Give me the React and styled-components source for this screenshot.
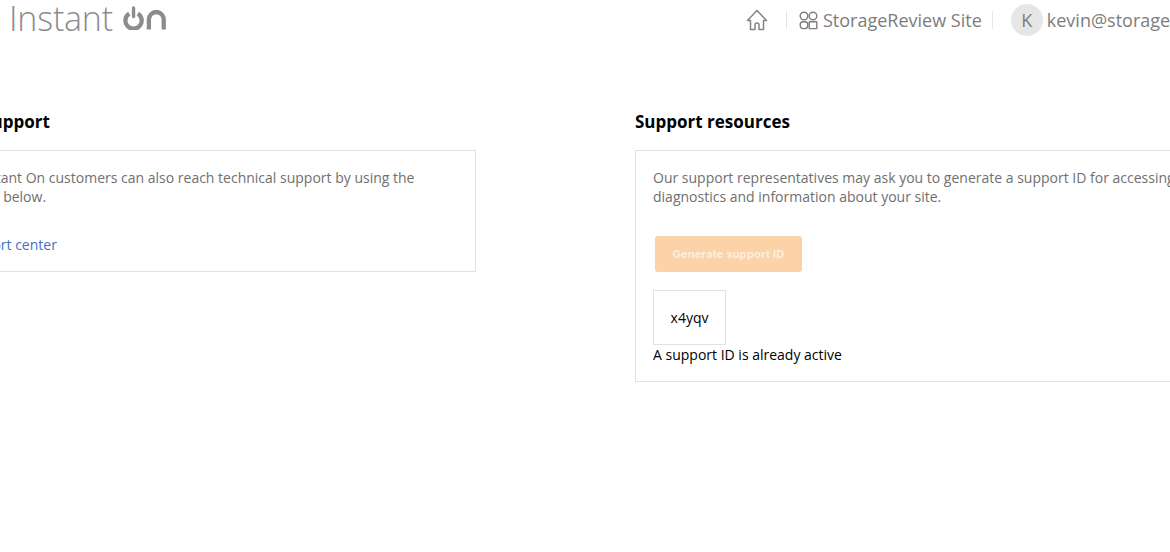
import React from 'react';
import styled, { createGlobalStyle } from 'styled-components';

const GlobalStyle = createGlobalStyle`
  html, body {
    margin: 0;
    padding: 0;
    background: #fff;
    font-family: "Open Sans", "Liberation Sans", sans-serif;
  }
`;

const Page = styled.div`
  width: 1170px;
  height: 552px;
  overflow: hidden;
  background: #fff;
`;

const Header = styled.header`
  display: flex;
  align-items: center;
  height: 40px;
  padding-left: 9px;
  white-space: nowrap;
`;

const Logo = styled.div`
  display: flex;
  align-items: center;
  gap: 10px;
  width: 158px;
  flex-shrink: 0;
  margin-top: -4px;
  color: #8c8c8c;
  font-size: 34px;
  font-weight: 300;
  letter-spacing: -0.2px;
  line-height: 36px;
`;

const Nav = styled.nav`
  display: flex;
  align-items: center;
  flex-shrink: 0;
  margin-left: 579px;
  color: #7d7d7d;
  font-size: 18px;
`;

const HomeLink = styled.div`
  display: flex;
  width: 22px;
  height: 22px;
  margin-right: 18px;
  color: #858585;
`;

const Divider = styled.span`
  width: 1px;
  height: 18px;
  background: #e6e6e6;
`;

const SiteName = styled.div`
  display: flex;
  align-items: center;
  gap: 5px;
  padding: 0 10px 0 12px;
`;

const Avatar = styled.span`
  display: flex;
  align-items: center;
  justify-content: center;
  width: 32px;
  height: 32px;
  margin: 0 4px 0 18px;
  border-radius: 50%;
  background: #e6e6e6;
  color: #7d7d7d;
  font-size: 18px;
`;

const Columns = styled.main`
  display: grid;
  grid-template-columns: 537px 700px;
  column-gap: 159px;
  margin: 70px 0 0 -61px;
`;

const Title = styled.h2`
  margin: 0 0 16px;
  color: #000;
  font-size: 17px;
  font-weight: 700;
  line-height: 24px;
`;

const Card = styled.section`
  box-sizing: border-box;
  padding: 17px;
  border: 1px solid #e1e1e1;
  color: #6f6f6f;
  font-size: 14px;
  line-height: 19px;
`;

const Text = styled.p`
  margin: 0;
`;

const SupportLink = styled.a`
  display: block;
  margin: 29px 0 0 2px;
  color: #3f72c4;
  text-decoration: none;
`;

const GenerateButton = styled.button`
  display: block;
  width: 147px;
  height: 36px;
  margin: 30px 0 18px 2px;
  padding: 0;
  border: 0;
  border-radius: 3px;
  background: #fcd2a8;
  color: #fdeedd;
  font-family: Inter, "Liberation Sans", sans-serif;
  font-size: 11px;
  font-weight: 700;
  letter-spacing: 0.2px;
`;

const CodeBox = styled.div`
  display: flex;
  align-items: center;
  justify-content: center;
  box-sizing: border-box;
  width: 73px;
  height: 55px;
  border: 1px solid #e1e1e1;
  color: #000;
`;

const Note = styled.div`
  color: #000;
`;

function HomeIcon() {
  return (
    <svg viewBox="0 0 22 22" width="22" height="22" fill="none" stroke="currentColor" strokeWidth="1.5" strokeLinejoin="round">
      <path d="M4.500 20.500V11.500H1.500L11 1.500l9.500 10h-3v9h-4.500v-4.500a2 2 0 0 0-4 0v4.500z" />
    </svg>
  );
}

function SitesIcon() {
  return (
    <svg viewBox="0 0 19 19" width="19" height="19" fill="none" stroke="currentColor" strokeWidth="1.400">
      <circle cx="5" cy="5" r="3.800" />
      <circle cx="14" cy="5" r="3.800" />
      <rect x="1.200" y="10.800" width="7.600" height="6.800" rx="3" />
      <rect x="10.200" y="10.800" width="7.600" height="6.800" rx="0.500" />
    </svg>
  );
}

function OnMark() {
  return (
    <svg viewBox="0 0 46 24" width="46" height="24" fill="none" stroke="#8c8c8c" strokeWidth="4.500">
      <path d="M6.500 7.500a8.500 8.500 0 1 0 9 0" />
      <path d="M11 1.500v9" strokeWidth="3.500" strokeLinecap="round" />
      <path d="M27 24V13.500a7.750 7.750 0 0 1 15.500 0V24" />
    </svg>
  );
}

export default function App() {
  return (
    <Page>
      <GlobalStyle />
      <Header>
        <Logo>
          Instant
          <OnMark />
        </Logo>
        <Nav>
          <HomeLink><HomeIcon /></HomeLink>
          <Divider />
          <SiteName>
            <SitesIcon />
            StorageReview Site
          </SiteName>
          <Divider />
          <Avatar>K</Avatar>
          kevin@storagereview.com
        </Nav>
      </Header>
      <Columns>
        <div>
          <Title>Chat support</Title>
          <Card>
            <Text>All Instant On customers can also reach technical support by using the<br />option below.</Text>
            <SupportLink href="#">Support center</SupportLink>
          </Card>
        </div>
        <div>
          <Title>Support resources</Title>
          <Card>
            <Text>Our support representatives may ask you to generate a support ID for accessing<br />diagnostics and information about your site.</Text>
            <GenerateButton disabled>Generate support ID</GenerateButton>
            <CodeBox>x4yqv</CodeBox>
            <Note>A support ID is already active</Note>
          </Card>
        </div>
      </Columns>
    </Page>
  );
}
